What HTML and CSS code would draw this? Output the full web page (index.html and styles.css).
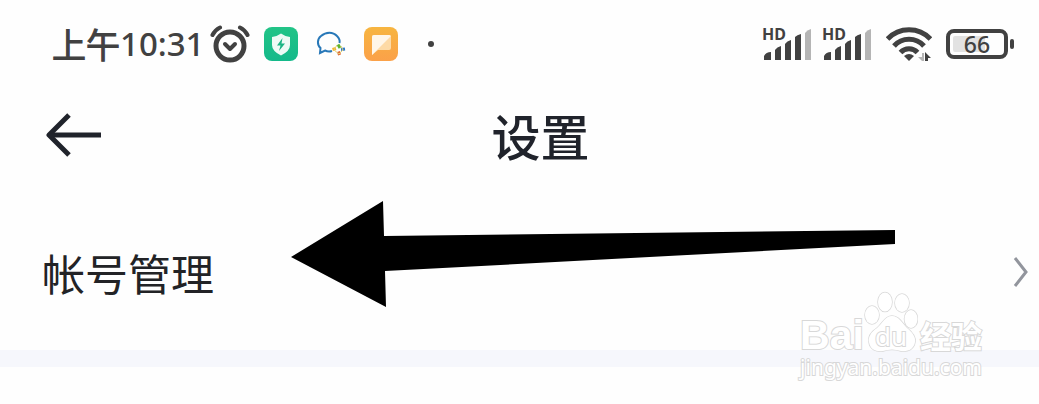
FILE: index.html
```html
<!DOCTYPE html>
<html lang="zh-CN">
<head>
<meta charset="utf-8">
<meta name="viewport" content="width=device-width, initial-scale=1">
<title>设置</title>
<link rel="stylesheet" href="styles.css">
</head>
<body>
<div class="status">
  <div class="status-left">
    <div class="time"><span class="period">上午</span><time class="clock">10:31</time></div>
    <svg class="alarm" width="40" height="40" viewBox="0 0 40 40" fill="none" stroke="#414141" stroke-linecap="round">
      <circle cx="20" cy="22" r="14" stroke-width="5"/>
      <path d="M2.500 11 Q5 6 10 3.500M30 3.500 Q35 6 37.500 11" stroke-width="4"/>
      <path d="M15 20l5 5 5-5" stroke-width="4" stroke-linejoin="round"/>
    </svg>
    <div class="apps">
    <svg width="34" height="34" viewBox="0 0 34 34">
      <defs><linearGradient id="green" x2="0" y2="1"><stop stop-color="#22c487"/><stop offset="1" stop-color="#14b98a"/></linearGradient></defs>
      <rect width="34" height="34" rx="8" fill="url(#green)"/>
      <path d="M17 6.500q4 3 9 3.500v8q0 6-9 10.500Q8 24 8 18v-8q5-.5 9-3.500z" fill="#eefaf5"/>
      <path d="M18.500 11l-5.500 7.500h3.500L15 24l6-7.500h-3.500z" fill="#1cb584"/>
    </svg>
    <svg width="34" height="34" viewBox="0 0 34 34" fill="none">
      <path d="M18 24c-3 1-5 .5-7-.5L6 26l.5-5C3 18 3 12 7 9c5-4.500 12-4.500 16 0 2 2 3 5 2.500 7" stroke="#2878b8" stroke-width="2"/>
      <path d="M24 17.500l2 3.500" stroke="#60b42c" stroke-width="3"/>
      <path d="M27 22.500l4-.5" stroke="#2878c8" stroke-width="3"/>
      <path d="M24.500 24.500l1 3.500" stroke="#e06a35" stroke-width="3"/>
      <path d="M18.500 22.500l3.500-1" stroke="#f4b72e" stroke-width="3"/>
      <path d="M23 18l-3 5 5 4 4-4-2-4" stroke="#e2cf74"/>
    </svg>
    <svg width="34" height="34" viewBox="0 0 34 34">
      <defs><linearGradient id="orange" x2="0" y2="1"><stop stop-color="#f7b540"/><stop offset="1" stop-color="#fba149"/></linearGradient></defs>
      <rect width="34" height="34" rx="8" fill="url(#orange)"/>
      <path d="M10 8h15q2 0 2 2v11q0 2-2 2H14l-6 5V10q0-2 2-2z" fill="#fddaa6"/>
      <path d="M10 8h15q1 0 2 1L8 28V10q0-2 2-2z" fill="#fff6e8"/>
    </svg>
    </div>
    <span class="dot"></span>
  </div>
  <div class="status-right">
    <div class="signal"><span class="hd">HD</span>
      <svg width="48" height="31" viewBox="0 0 48 31" fill="#414141"><path d="M0 31v-4q2-4 7-4v8zM11 31V21q2-3 6-4v14zM21 31V15q2-3 6-4v20zM31 31V8q2-2 6-3v26z"/><path d="M41 31V4q2-3 6-4v31z" fill="#b5b5b5"/></svg>
    </div>
    <div class="signal"><span class="hd">HD</span>
      <svg width="48" height="31" viewBox="0 0 48 31" fill="#414141"><path d="M0 31v-4q2-4 7-4v8zM11 31V21q2-3 6-4v14zM21 31V15q2-3 6-4v20zM31 31V8q2-2 6-3v26z"/><path d="M41 31V4q2-3 6-4v31z" fill="#b5b5b5"/></svg>
    </div>
    <svg class="wifi" width="46" height="36" viewBox="0 0 46 36" fill="none" stroke="#414141" stroke-width="5">
      <path d="M1.500 13C13 .5 33 .5 44.500 13"/>
      <path d="M8 20c8-9 22-9 30 0"/>
      <path d="M14.500 26.500c4.500-5 12.500-5 17 0"/>
      <path d="M18 30q5-4 10 0l-5 5z" fill="#414141" stroke="none"/>
      <path d="M38 35V27l-2 0v4l-4 0 4 4z" fill="#b5b5b5" stroke="none"/>
      <path d="M39 35v-9l6 6h-3v3z" fill="#414141" stroke="none"/>
    </svg>
    <div class="battery"><span class="level">66</span></div>
  </div>
</div>
<header class="header">
  <button class="back" type="button" aria-label="返回">
    <svg width="56" height="44" viewBox="0 0 56 44" fill="none" stroke="#20232b" stroke-width="5"><path d="M23 2L3 22l20 20" stroke-linejoin="round"/><path d="M3 22h52"/></svg>
  </button>
  <h1 class="title">设置</h1>
</header>
<main>
  <a class="row" href="#account"><span>帐号管理</span>
    <svg width="16" height="30" viewBox="0 0 16 30" fill="none" stroke="#92959d" stroke-width="3"><path d="M2 1l11 14L2 29"/></svg>
  </a>
  <div class="divider"></div>
</main>
<svg class="pointer" width="606" height="108" viewBox="0 0 606 108" aria-hidden="true"><path d="M0 57L92 1l1 35 511-6v14L94 71l1 36z"/></svg>
<div class="watermark">
  <div class="brand">
    <span class="bai">Bai</span>
    <span class="paw">
      <svg width="54" height="62" viewBox="0 0 54 62" fill="#fff" stroke="#d8d8d8" stroke-width="1.500"><ellipse cx="8" cy="24" rx="7" ry="9"/><ellipse cx="21" cy="11" rx="7" ry="9.500"/><ellipse cx="38" cy="12" rx="7" ry="9"/><ellipse cx="47" cy="28" rx="6.500" ry="9"/><path d="M28 25c-7 0-10 8-15 12-6 4-9 9-8 14 1 8 8 10 14 9 6-2 12-2 18 0 7 1 13-2 14-9 1-5-3-10-8-14-5-5-8-12-15-12z"/></svg>
      <span class="du">du</span>
    </span>
    <span class="exp">经验</span>
  </div>
  <div class="url">jingyan.baidu.com</div>
</div>
</body>
</html>
```
FILE: styles.css
```css
* { box-sizing: border-box; }
body {
  margin: 0;
  position: relative;
  min-height: 100vh;
  background: #fefefe;
  color: #222326;
  font-family: "Noto Sans", "Noto Sans CJK SC", sans-serif;
}
svg { display: block; flex: none; }
.status {
  display: flex;
  justify-content: space-between;
  height: 88px;
  padding: 0 31px 0 52px;
  color: #414141;
}
.status-left, .status-right { display: flex; align-items: center; }
.time { display: flex; align-items: center; line-height: 40px; }
.period { font-family: "Noto Sans CJK SC", sans-serif; font-size: 34px; -webkit-text-stroke: 1px #414141; }
.clock { font-size: 33px; font-weight: 500; }
.alarm { margin-left: 6px; }
.apps { display: flex; gap: 16px; margin-left: 14px; }
.dot { width: 6px; height: 6px; margin-left: 30px; border-radius: 50%; background: #414141; }
.status-right { gap: 10px; }
.signal { position: relative; padding-left: 2px; }
.wifi { margin: 0 4px; }
.hd {
  position: absolute;
  top: -3px;
  left: 0;
  font: 700 16px/16px "Noto Sans", sans-serif;
}
.battery {
  position: relative;
  width: 62px;
  height: 30px;
  padding: 3px;
  border: 4px solid #414141;
  border-radius: 8px;
}
.battery::after {
  content: "";
  position: absolute;
  top: 6px;
  right: -10px;
  width: 4px;
  height: 10px;
  border-radius: 2px;
  background: #414141;
}
.level {
  display: block;
  background: linear-gradient(90deg, #e2e2e2 66%, transparent 66%);
  border-radius: 2px;
  font-size: 23px;
  font-weight: 500;
  line-height: 16px;
  text-align: center;
}
.header {
  display: grid;
  grid-template-columns: 56px 1fr 56px;
  align-items: center;
  height: 94px;
  padding: 0 4px 0 46px;
}
.back { padding: 0; border: 0; background: none; }
.title {
  margin: 0;
  font: 500 49px/72px "Noto Sans CJK SC", sans-serif;
  text-align: center;
  color: #20232b;
}
.row {
  display: flex;
  align-items: center;
  justify-content: space-between;
  height: 168px;
  padding: 12px 10px 0 42px;
  color: #222326;
  font: 400 43px/64px "Noto Sans CJK SC", sans-serif;
  text-decoration: none;
}
.divider { height: 17px; background: #f6f7fc; }
.pointer { position: absolute; top: 200px; left: 291px; }
.watermark {
  position: absolute;
  top: 291px;
  right: 57px;
  color: #fff;
  -webkit-text-stroke: 2px #d8d8d8;
  paint-order: stroke fill;
}
.brand { display: flex; align-items: flex-end; height: 62px; }
.bai { font: 700 41px/36px "Liberation Sans", sans-serif; }
.paw { position: relative; margin-right: 2px; }
.du {
  position: absolute;
  right: 0;
  bottom: 4px;
  left: 0;
  font: 400 26px/26px "Noto Sans", sans-serif;
  text-align: center;
}
.exp { font: 700 31px/36px "Noto Sans CJK SC", sans-serif; }
.url { font: 400 21px/28px "Noto Sans", sans-serif; }
```
